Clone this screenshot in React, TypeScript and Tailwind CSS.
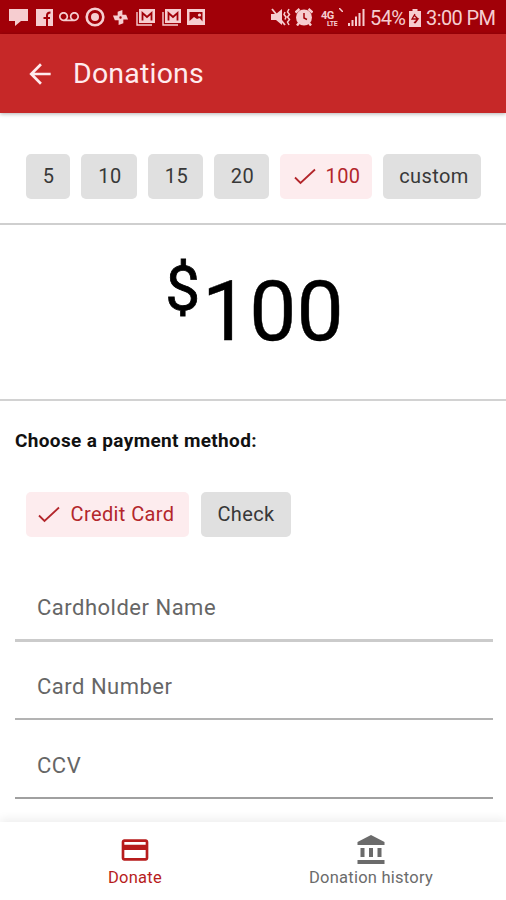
import type { ReactNode } from 'react'
import { clsx } from 'clsx'
import { MdArrowBack, MdCreditCard, MdVoicemail } from 'react-icons/md'

const AMOUNTS = [
  { label: '5', box: 'w-[44px] pl-px' },
  { label: '10', box: 'w-[56px] pl-0.5' },
  { label: '15', box: 'w-[55px] pl-0.5' },
  { label: '20', box: 'w-[55px] pl-0.5' },
  { label: '100', box: 'w-[92px] pl-0.5', selected: true },
  { label: 'custom', box: 'w-[98px] pl-1' },
]

const METHODS = [
  { label: 'Credit Card', box: 'w-[163px] pr-0.5', selected: true },
  { label: 'Check', box: 'w-[90px]' },
]

const FIELDS = [
  { label: 'Cardholder Name', line: 'border-b-[3px] border-[#cbcbcb]' },
  { label: 'Card Number', line: 'border-b-2 border-[#b3b3b3]' },
  { label: 'CCV', line: 'border-b-2 border-[#a0a0a0]' },
]

function MailIcon() {
  return (
    <svg className="w-[20px] h-[18px]" viewBox="0 0 20 18" fill="none" stroke="currentColor">
      <path d="M1 4v13h15" strokeWidth="1.4" />
      <path d="M3 1h16v14H3z" fill="currentColor" stroke="none" />
      <path d="M6.500 12.500V5l4.500 4 4.500-4v7.500" stroke="#a10008" strokeWidth="1.8" />
    </svg>
  )
}

function BankIcon() {
  return (
    <svg className="my-px h-[32px] w-[28px]" viewBox="0 0 28 32" fill="currentColor">
      <path d="M14 1l13.500 7v3H.5V8zM3.500 14h4v9h-4zM12 14h4v9h-4zM20.500 14h4v9h-4zM.5 26h27v4H.5z" />
    </svg>
  )
}

function StatusBar() {
  return (
    <header className="flex h-[34px] items-center bg-[#a10008] text-[#f6cdd0]">
      {/* Notifications */}
      <div className="flex h-full flex-1 items-center pl-[9px]">
        <svg className="w-[19px] h-[18px]" viewBox="0 0 19 18" fill="currentColor">
          <path d="M0 1h19v12H12L6 18v-5H0z" />
        </svg>
        <svg className="ml-[8px] w-[17px] h-[17px]" viewBox="0 0 17 17">
          <rect width="17" height="17" fill="currentColor" />
          <path d="M11 17V6.500Q11 3.500 14.500 3.500M7.500 9H14" fill="none" stroke="#a10008" strokeWidth="2" />
        </svg>
        <MdVoicemail className="ml-[6px] h-[20px] w-[20px]" />
        <svg className="ml-[6px] w-[20px] h-[20px]" viewBox="0 0 20 20" fill="none" stroke="currentColor">
          <circle cx="10" cy="10" r="8.300" strokeWidth="2.600" />
          <circle cx="10" cy="10" r="4" fill="currentColor" stroke="none" />
        </svg>
        {/* Pinwheel, one blade per side */}
        <svg className="ml-[7px] w-[17px] h-[17px]" viewBox="0 0 18 18" fill="currentColor">
          <path d="M6 8V3l5-2v7zM10 6h5l2 5h-7zM12 10v5l-5 2v-7zM8 12H3L1 7h7z" />
          <circle cx="9" cy="9" r="1" fill="#a10008" />
        </svg>
        <div className="ml-[7px] flex gap-[6px]">
          <MailIcon />
          <MailIcon />
        </div>
        <svg className="ml-[5px] w-[18px] h-[16px]" viewBox="0 0 18 16">
          <path d="M0 0h18v16H0z" fill="currentColor" />
          <path d="M2.500 3h13v9.500l-3-3.500-2.500 1-3-2-4.500 4z" fill="#a10008" />
          <circle cx="12.500" cy="6" r="1.600" fill="currentColor" />
        </svg>
      </div>

      {/* System state */}
      <div className="flex h-full items-center pr-[10px]">
        <svg className="w-[20px] h-[18px]" viewBox="0 0 20 18" fill="none" stroke="currentColor">
          <path d="M0 6h5l6-5v16l-6-5H0z" fill="currentColor" stroke="none" />
          <path d="M1 1l13 16" strokeWidth="1.800" />
          <path d="M14 4l-1 2.500 2 2.500-1 2.500M18 1l-1.500 3 2 2.500-2 2.500 2 2.500-2 2.500L18 17" strokeWidth="1.500" />
        </svg>
        <svg className="ml-[4px] w-[18px] h-[18px]" viewBox="0 0 18 18" fill="none">
          <circle cx="9" cy="9.500" r="8" fill="currentColor" />
          <path d="M.5 4.500l4-3.500M17.500 4.500l-4-3.500M4 15l-2 2.500M14 15l2 2.500" stroke="currentColor" strokeWidth="2.400" />
          <path d="M9 5v5l3 1.500" stroke="#a10008" strokeWidth="1.500" />
        </svg>
        <div className="ml-[8px] flex h-[20px] w-[22px] items-start font-bold">
          <div className="flex w-[18px] flex-col pt-[5px]">
            <span className="h-[8px] text-[11px] leading-[8px] tracking-[-0.5px]">4G</span>
            <span className="h-[7px] pl-[6px] pt-px text-[7px] leading-[6px] tracking-[-0.3px]">LTE</span>
          </div>
          <svg className="mt-px h-[4px] w-[4px]" viewBox="0 0 4 4">
            <path d="M0 0l4 4" stroke="currentColor" strokeWidth="1.500" />
          </svg>
        </div>
        <svg className="ml-[5px] w-[17px] h-[17px]" viewBox="0 0 17 17" fill="currentColor">
          <path d="M0 14h2v3H0zM3.500 11h2v6h-2zM7 7.500h2V17H7zM10.500 4h2v13h-2zM14.500 0h2v17h-2z" />
        </svg>
        <span className="ml-[5px] mt-[2px] w-[35px] whitespace-nowrap text-[20px] leading-[34px] tracking-[-0.6px]">54%</span>
        <svg className="ml-[4px] mt-px w-[12px] h-[18px]" viewBox="0 0 12 18">
          <path d="M3.500 0h5v2H12v16H0V2h3.500z" fill="currentColor" />
          <path d="M6 5l-3 5h6l-3 4M5 6l4 4-4 4" fill="none" stroke="#a10008" strokeWidth="1.300" />
        </svg>
        <span className="ml-[5px] mt-[2px] w-[70px] whitespace-nowrap text-[20px] leading-[34px] tracking-[-0.6px]">3:00 PM</span>
      </div>
    </header>
  )
}

function Chip({ label, box, selected }: { label: string; box: string; selected?: boolean }) {
  return (
    <button
      className={clsx(
        'flex h-[45px] items-center justify-center rounded-[5px] pb-px text-[20px] tracking-[0.4px]',
        box,
        selected ? 'bg-[#fdecee] text-[#b3262b]' : 'bg-[#e0e0e0] text-[#383838]',
      )}
    >
      {selected && (
        <svg className="mr-[10px] mt-px w-[22px] h-[17px]" viewBox="0 0 22 17" fill="none">
          <path d="M1 9.500L6.500 15 21 1.500" stroke="currentColor" strokeWidth="1.800" />
        </svg>
      )}
      {label}
    </button>
  )
}

function Tab({ icon, label, active }: { icon: ReactNode; label: string; active?: boolean }) {
  return (
    <button
      className={clsx(
        'flex flex-1 flex-col items-center pt-[11px] text-[16.5px] leading-[22px] tracking-[0.25px]',
        active ? 'text-[#b71c1c]' : 'text-[#6b6b6b]',
      )}
    >
      {icon}
      <span>{label}</span>
    </button>
  )
}

export default function App() {
  return (
    <div className="flex h-[900px] w-[506px] flex-col overflow-hidden bg-white font-['Roboto',sans-serif]">
      <StatusBar />

      <div className="z-10 flex h-[79px] shrink-0 items-center bg-[#c62828] pl-[24px] text-[#ffebee] shadow-[0_1px_4px_rgba(0,0,0,0.3)]">
        <MdArrowBack className="h-[32px] w-[32px]" />
        <h1 className="ml-[17px] mt-px text-[28.5px] tracking-[0.2px]">Donations</h1>
      </div>

      <main className="flex flex-1 flex-col">
        <section className="flex h-[112px] gap-[11px] border-b-2 border-[#cfcfcf] pl-[26px] pt-[41px]">
          {AMOUNTS.map((a) => (
            <Chip key={a.label} {...a} />
          ))}
        </section>

        <section className="flex h-[176px] items-start justify-center border-b-2 border-[#d2d2d2] pl-[3px] text-black">
          <span className="mt-[28px] text-[62px] leading-[72px] [-webkit-text-stroke:0.8px]">$</span>
          <span className="ml-[2px] mt-[38px] text-[84px] leading-[98px] [-webkit-text-stroke:0.4px]">100</span>
        </section>

        <section className="pl-[15px] pr-[13px] pt-[27px]">
          <h2 className="text-[19px] font-bold leading-[26px] tracking-[0.35px] text-[#111]">Choose a payment method:</h2>
          <div className="mt-[38px] flex gap-[12px] pl-[11px]">
            {METHODS.map((m) => (
              <Chip key={m.label} {...m} />
            ))}
          </div>
          <div className="mt-[26px]">
            {FIELDS.map((f) => (
              <div
                key={f.label}
                className={clsx('flex h-[78.6px] items-center pl-[22px] pt-[14px] text-[22px] tracking-[0.5px] text-[#666]', f.line)}
              >
                {f.label}
              </div>
            ))}
          </div>
        </section>
      </main>

      <nav className="z-10 flex h-[78px] shrink-0 bg-white px-[17px] shadow-[0_-3px_9px_rgba(0,0,0,0.07)]">
        <Tab active label="Donate" icon={<MdCreditCard className="my-px h-[32px] w-[32px]" />} />
        <Tab label="Donation history" icon={<BankIcon />} />
      </nav>
    </div>
  )
}
